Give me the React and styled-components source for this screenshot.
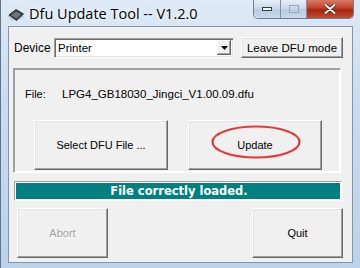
import React from 'react';
import styled, { createGlobalStyle } from 'styled-components';

const Global = createGlobalStyle`
  html, body { margin: 0; padding: 0; background: #1e2a36; }
  body { width: 360px; height: 268px; overflow: hidden; }
`

const Window = styled.div`
  width: 360px;
  height: 268px;
  box-sizing: border-box;
  display: flex;
  flex-direction: column;
  padding: 0 7px 5px 7px;
  background: linear-gradient(180deg, #dde9f6 0%, #c9dbef 40%, #bcd1ea 100%);
  border-left: 1px solid #5e7590;
  font-family: "Liberation Sans", Arial, sans-serif;
`

const TitleBar = styled.div`
  height: 26px;
  display: flex;
  align-items: flex-start;
`

const TitleIcon = styled.svg`
  width: 18px;
  height: 14px;
  margin: 8px 4px 0 -1px;
`

const TitleText = styled.span`
  font-family: "Open Sans", "Noto Sans", sans-serif;
  font-size: 14.5px;
  line-height: 18px;
  margin-top: 5px;
  color: #000;
  text-shadow: 0 0 8px #fff, 0 0 4px #fff;
`

const Controls = styled.div`
  display: flex;
  margin-left: auto;
  margin-right: -1px;
  height: 18px;
  border: 1px solid #6d7f95;
  border-top: none;
  border-radius: 0 0 5px 5px;
  overflow: hidden;
`

const CtrlButton = styled.div`
  width: ${p => p.$w}px;
  height: 18px;
  display: flex;
  align-items: center;
  justify-content: center;
  background: linear-gradient(180deg, #e6eef8 0%, #ccdaeb 45%, #b7cbe3 55%, #c9d9ec 100%);
  border-left: ${p => p.$first ? 'none' : '1px solid #7f91a8'};
`

const CloseButton = styled(CtrlButton)`
  background: linear-gradient(180deg, #d97a64 0%, #c44128 45%, #a82310 55%, #c04e30 100%);
`

const Client = styled.div`
  flex: 1;
  background: #f0f0f0;
  border: 1px solid #8195ad;
  display: flex;
  flex-direction: column;
`

const DeviceRow = styled.div`
  display: flex;
  align-items: center;
  margin: 10px 0 0 5px;
  height: 21px;
`

const Label = styled.span`
  font-size: ${p => p.$fs || 11}px;
  color: #000;
  width: ${p => p.$w || 'auto'};
`

const Combo = styled.div`
  width: 180px;
  height: 20px;
  box-sizing: border-box;
  background: #fff;
  border: 1px solid;
  border-color: #a0a0a0 #fff #fff #a0a0a0;
  box-shadow: inset 1px 1px #696969, inset -1px -1px #e3e3e3;
  display: flex;
  align-items: center;
  padding: 0 2px 0 3px;
  font-size: 11.5px;
`

const ComboValue = styled.span`
  flex: 1;
`

const Arrow = styled.div`
  width: 14px;
  height: 15px;
  box-sizing: border-box;
  background: #f0f0f0;
  box-shadow: inset -1px -1px #696969, inset 1px 1px #fff, inset -2px -2px #a0a0a0;
  display: flex;
  align-items: center;
  justify-content: center;
`

const Button = styled.button`
  width: ${p => p.$w}px;
  height: ${p => p.$h}px;
  margin-left: ${p => p.$ml || 0}px;
  box-sizing: border-box;
  padding: 0;
  border: 1px solid;
  border-color: #fff #696969 #696969 #fff;
  box-shadow: inset -1px -1px #a0a0a0, inset 1px 1px #e3e3e3;
  background: #f0f0f0;
  font-family: "Liberation Sans", Arial, sans-serif;
  font-size: ${p => p.$fs || 11}px;
  color: ${p => p.disabled ? '#a0a0a0' : '#000'};
  text-shadow: ${p => p.disabled ? '1px 1px #fff' : 'none'};
`

const Group = styled.div`
  margin: 10px 0 0 4px;
  width: 328px;
  height: 105px;
  box-sizing: border-box;
  border: 1px solid;
  border-color: #a0a0a0 #fff #fff #a0a0a0;
  box-shadow: 1px 1px #a0a0a0 inset, -1px -1px #fff inset;
  display: flex;
  flex-direction: column;
  position: relative;
`

const FileRow = styled.div`
  display: flex;
  align-items: center;
  margin: 18px 0 0 11px;
  height: 14px;
`

const ButtonRow = styled.div`
  display: flex;
  justify-content: ${p => p.$spread ? 'space-between' : 'flex-start'};
  gap: ${p => p.$gap || 0}px;
  margin: ${p => p.$m};
`

const Ellipse = styled.svg`
  position: absolute;
  left: 196px;
  top: 55px;
  width: 92px;
  height: 36px;
  pointer-events: none;
`

const Status = styled.div`
  margin: 8px 0 0 5px;
  width: 328px;
  height: 20px;
  box-sizing: border-box;
  border: 1px solid;
  border-color: #a0a0a0 #fff #fff #a0a0a0;
  padding: 1px;
  background: #fff;
  display: flex;
`

const StatusInner = styled.div`
  flex: 1;
  background: #008080;
  color: #fff;
  font-family: "DejaVu Sans", Verdana, sans-serif;
  font-weight: bold;
  font-size: 11.5px;
  display: flex;
  align-items: center;
  justify-content: center;
  padding-left: 2px;
`

export default function App() {
  return (
    <>
      <Global />
      <Window>
        <TitleBar>
          <TitleIcon viewBox="0 0 18 14">
            <path d="M2 7 L9 1.5 L16.5 6 L9.5 12.5 Z" fill="#3a3f46" stroke="#111" strokeWidth="0.8" />
            <path d="M4 7.2 L9 3.3 L14.2 6.3 L9.4 10.6 Z" fill="#6c747e" />
            <path d="M1.5 7.5 L1 9 M3.5 9.5 L3 11 M5.5 11 L5 12.6 M13 9.5 L14 11 M15 7.8 L16.3 9" stroke="#999" strokeWidth="1" />
          </TitleIcon>
          <TitleText>Dfu Update Tool -- V1.2.0</TitleText>
          <Controls>
            <CtrlButton $w={26} $first>
              <svg width="10" height="4"><rect x="0.5" y="0.5" width="9" height="3" fill="#fff" stroke="#2b3d55" /></svg>
            </CtrlButton>
            <CtrlButton $w={25}>
              <svg width="10" height="8"><rect x="0.5" y="0.5" width="9" height="7" fill="none" stroke="#95a6bc" /><rect x="2" y="2.5" width="6" height="4" fill="none" stroke="#c6d3e3" /></svg>
            </CtrlButton>
            <CloseButton $w={46}>
              <svg width="12" height="10" viewBox="0 0 12 10">
                <path d="M1.5 1 L10.5 9 M10.5 1 L1.5 9" stroke="#4a1a10" strokeWidth="3.4" strokeLinecap="round" />
                <path d="M1.5 1 L10.5 9 M10.5 1 L1.5 9" stroke="#fff" strokeWidth="2" strokeLinecap="round" />
              </svg>
            </CloseButton>
          </Controls>
        </TitleBar>
        <Client>
          <DeviceRow>
            <Label $w="40px" $fs={12}>Device</Label>
            <Combo>
              <ComboValue>Printer</ComboValue>
              <Arrow>
                <svg width="7" height="4"><path d="M0 0 H7 L3.5 4 Z" fill="#000" /></svg>
              </Arrow>
            </Combo>
            <Button $w={102} $h={21} $ml={7} $fs={11.5}>Leave DFU mode</Button>
          </DeviceRow>
          <Group>
            <FileRow>
              <Label $w="37px">File:</Label>
              <Label $fs={11.5}>LPG4_GB18030_Jingci_V1.00.09.dfu</Label>
            </FileRow>
            <ButtonRow $m="19px 0 0 20px" $gap={20}>
              <Button $w={134} $h={50}>Select DFU File ...</Button>
              <Button $w={134} $h={50}>Update</Button>
            </ButtonRow>
            <Ellipse viewBox="0 0 92 36">
              <ellipse cx="46" cy="18" rx="43.5" ry="15.5" fill="none" stroke="#e23a3a" strokeWidth="2.2" />
            </Ellipse>
          </Group>
          <Status>
            <StatusInner>File correctly loaded.</StatusInner>
          </Status>
          <ButtonRow $m="7px 9px 0 8px" $spread>
            <Button $w={91} $h={50} disabled>Abort</Button>
            <Button $w={91} $h={50}>Quit</Button>
          </ButtonRow>
        </Client>
      </Window>
    </>
  );
}
